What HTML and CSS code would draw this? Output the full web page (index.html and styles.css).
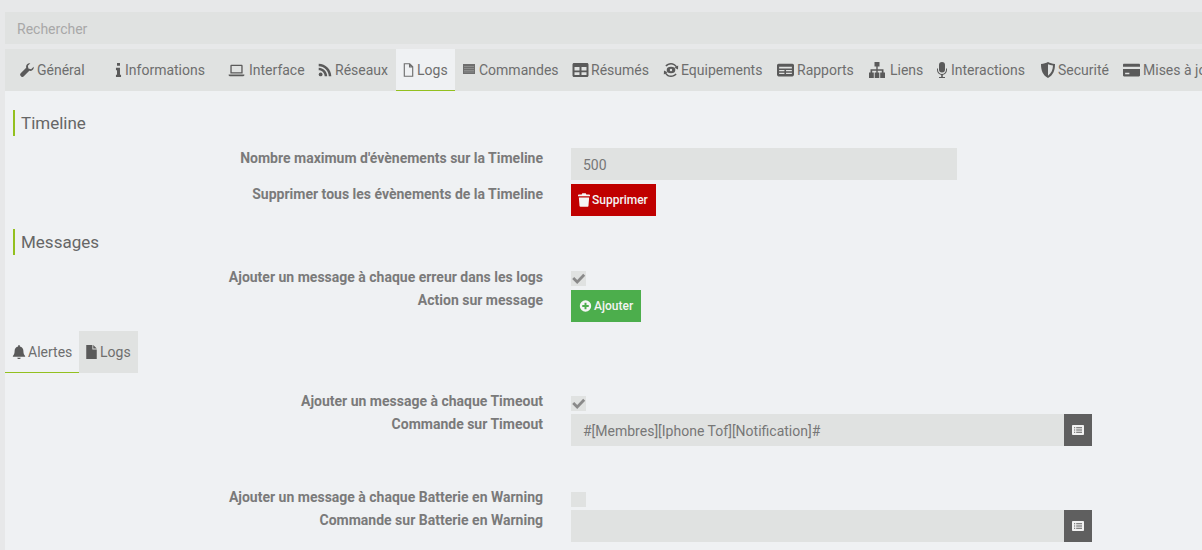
FILE: index.html
```html
<!DOCTYPE html>
<html lang="fr">
<head>
<meta charset="utf-8">
<title>Configuration</title>
<link rel="stylesheet" href="styles.css">
</head>
<body>
<div class="page">
  <div class="search">Rechercher</div>
  <nav class="tabs">
    <a class="tab t-general"><svg class="ic" viewBox="0 0 16 16"><path d="M15.6 4.2c.3 1.500-.2 3-1.300 3.900-1 .9-2.400 1.200-3.700.8L4.400 15.200c-.9.900-2.200.900-3 .1l-.7-.7c-.8-.8-.8-2.100.1-3l6.300-6.200C6.700 4.100 7 2.700 7.900 1.700 8.900.6 10.400.1 11.800.4L9 3.200l.6 3.100 3.100.7z"/></svg>Général</a>
    <a class="tab t-info"><svg class="ic ic-n" viewBox="0 0 7 16"><path d="M1.800 0h3.400v3H1.800zM.6 5.500h4.600v7.800h1.200V16H.6v-2.700h1.200V8.200H.6z"/></svg>Informations</a>
    <a class="tab t-iface"><svg class="ic ic-w" viewBox="0 0 18 16"><path fill-rule="evenodd" d="M3.200 2h11.600c.7 0 1.200.5 1.200 1.200v8.800H2V3.200C2 2.500 2.500 2 3.200 2zm.3 1.500v7h11v-7zM0 13h18v.7c0 .7-.6 1.300-1.300 1.300H1.300C.6 15 0 14.400 0 13.700z"/></svg>Interface</a>
    <a class="tab t-net"><svg class="ic" viewBox="0 0 16 16"><circle cx="3" cy="13" r="2.200"/><path d="M.8 5.500c5.300 0 9.700 4.400 9.700 9.700H7.600c0-3.700-3-6.800-6.800-6.800zM.8.800C8.700.8 15.200 7.300 15.200 15.200h-2.900C12.300 8.900 7.100 3.700.8 3.700z"/></svg>Réseaux</a>
    <a class="tab tab-on t-logs"><svg class="ic ic-f" viewBox="0 0 12 16"><path fill="none" stroke="currentColor" stroke-width="1.300" d="M1.200.9h6.200l3.400 3.400v10.800H1.200zM7.200 1v3.500h3.500"/></svg>Logs</a>
    <a class="tab t-cmd"><svg class="ic ic-s" viewBox="0 0 12 10"><path d="M0 0h12v10H0z"/><path fill="#a9abaa" d="M1 2.500h10v.6H1zM1 4.300h10v.5H1zM1 6h10v.5H1zM1 7.700h10v.5H1z"/></svg>Commandes</a>
    <a class="tab t-res"><svg class="ic ic-w ic-tight" viewBox="0 0 16 14"><path fill-rule="evenodd" d="M1.500 0h13c.8 0 1.500.7 1.500 1.500v11c0 .8-.7 1.500-1.500 1.500h-13C.7 14 0 13.300 0 12.500v-11C0 .7.700 0 1.500 0zM2 4v3.500h5V4zm7 0v3.500h5V4zm-7 5.200V12h5V9.200zm7 0V12h5V9.200z"/></svg>Résumés</a>
    <a class="tab t-eq"><svg class="ic ic-l" viewBox="0 0 16 16"><path d="M8 1c2.500 0 4.700 1.300 5.900 3.300l1.300-.8-.2 4-3.500-1.700 1.200-.7C11.700 3.500 10 2.500 8 2.500 6.300 2.500 4.700 3.300 3.700 4.600L2.300 3.700C3.700 2 5.700 1 8 1zM8 15c-2.500 0-4.700-1.300-5.900-3.300l-1.300.8.200-4 3.500 1.700-1.200.7c1 1.600 2.700 2.600 4.700 2.600 1.700 0 3.300-.8 4.300-2.100l1.400.9C12.300 14 10.300 15 8 15z"/><ellipse cx="8" cy="8" rx="4.300" ry="3.300"/><circle cx="8" cy="8" r="1.200" fill="#e0e2e1"/></svg>Equipements</a>
    <a class="tab t-rep"><svg class="ic ic-w ic-r" viewBox="0 0 16 12"><path fill-rule="evenodd" d="M1.500 0h13c.8 0 1.500.7 1.500 1.500v9c0 .8-.7 1.500-1.500 1.500h-13C.7 12 0 11.300 0 10.500v-9C0 .7.700 0 1.500 0zM2 3v1.500h12V3zm0 3v1.200h5V6zm6.500 0v1.200H14V6zM2 8.500v1.200h5V8.500zm6.500 0v1.200H14V8.500z"/></svg>Rapports</a>
    <a class="tab t-link"><svg class="ic ic-xl" viewBox="0 0 18 16"><path d="M6.500 0h5v4.500h-1.800v2.700h5.800v3.300H17V16h-4.800v-5.500h1.600V8.700H9.700v1.800h1.600V16H6.700v-5.500h1.600V8.700H4.200v1.800h1.600V16H1v-5.500h1.500V7.200h5.800V4.500H6.500z"/></svg>Liens</a>
    <a class="tab t-int"><svg class="ic ic-m" viewBox="0 0 10 16"><rect x="2" y="0" width="6" height="10.500" rx="3"/><path d="M0 6.500h1V8c0 2.200 1.800 4 4 4s4-1.800 4-4V6.500h1V8c0 2.500-1.800 4.500-4.200 4.900V15H8v1H2v-1h2.200v-2.100C1.800 12.500 0 10.500 0 8z"/></svg>Interactions</a>
    <a class="tab t-sec"><svg class="ic ic-l" viewBox="0 0 16 16"><path fill-rule="evenodd" d="M8 0c2 1.200 4.200 1.800 7 1.900 0 6-1.500 11-7 14.100C2.500 12.900 1 7.900 1 1.900 3.800 1.800 6 1.200 8 0zm0 2.200v11.500c3.600-2.500 4.800-6.200 5-10.200-1.900-.2-3.500-.6-5-1.300z"/></svg>Securité</a>
    <a class="tab t-upd"><svg class="ic ic-w ic-r" viewBox="0 0 16 12"><path fill-rule="evenodd" d="M1 0h14c.6 0 1 .4 1 1v2H0V1c0-.6.4-1 1-1zM0 5h16v6c0 .6-.4 1-1 1H1c-.6 0-1-.4-1-1zm2 3.500V10h4V8.500z"/></svg>Mises à jour</a>
  </nav>
  <main class="content">
    <h2 class="legend first">Timeline</h2>
    <div class="row">
      <label class="lbl">Nombre maximum d'évènements sur la Timeline</label>
      <div class="field short">500</div>
    </div>
    <div class="row">
      <label class="lbl">Supprimer tous les évènements de la Timeline</label>
      <div><a class="btn btn-red"><svg class="bi" viewBox="0 0 14 16"><path d="M5 0h4l.7 1.500H13c.6 0 1 .4 1 1V3.500H0V2.500c0-.6.4-1 1-1h3.300zM1 5h12l-.8 10c0 .6-.5 1-1.100 1H2.900c-.6 0-1-.4-1.100-1z"/></svg>Supprimer</a></div>
    </div>
    <h2 class="legend second">Messages</h2>
    <div class="row row-check">
      <label class="lbl">Ajouter un message à chaque erreur dans les logs</label>
      <div><span class="check on"><svg viewBox="0 0 15 15"><path d="M1.200 8l2-2 3 3 6-6.200 2 2-8 8.200z"/></svg></span></div>
    </div>
    <div class="row">
      <label class="lbl">Action sur message</label>
      <div><a class="btn btn-green"><svg class="bi bi-c" viewBox="0 0 16 16"><path fill-rule="evenodd" d="M8 1a7 7 0 1 1 0 14A7 7 0 0 1 8 1zM6.800 4v2.800H4v2.400h2.800V12h2.400V9.200H12V6.800H9.200V4z"/></svg>Ajouter</a></div>
    </div>
    <div class="subtabs">
      <a class="sub sub-on"><svg class="ic" viewBox="0 0 14 16"><path d="M7 0c.6 0 1 .4 1 1v.7c2.400.4 4 2.300 4 4.800 0 3 .7 4.800 2 6V13.500H0v-1c1.300-1.200 2-3 2-6 0-2.500 1.600-4.400 4-4.800V1c0-.6.400-1 1-1zM5 14.500h4C9 15.400 8.100 16 7 16s-2-.6-2-1.500z"/></svg>Alertes</a>
      <a class="sub"><svg class="ic ic-f" viewBox="0 0 12 16"><path d="M0 0h7v5h5v11H0zM8 0l4 4H8z"/></svg>Logs</a>
    </div>
    <div class="row row-check">
      <label class="lbl">Ajouter un message à chaque Timeout</label>
      <div><span class="check low on"><svg viewBox="0 0 15 15"><path d="M1.200 8l2-2 3 3 6-6.200 2 2-8 8.200z"/></svg></span></div>
    </div>
    <div class="row">
      <label class="lbl">Commande sur Timeout</label>
      <div class="group">
        <div class="field grow">#[Membres][Iphone Tof][Notification]#</div>
        <a class="addon"><svg viewBox="0 0 12 10"><path fill-rule="evenodd" d="M.8 0h10.400c.4 0 .8.400.8.800v8.400c0 .4-.4.800-.8.800H.8c-.4 0-.8-.4-.8-.8V.8C0 .4.400 0 .8 0zM2 2.300v1h1.200v-1zm2.200 0v1H10v-1zM2 4.500v1h1.200v-1zm2.200 0v1H10v-1zM2 6.700v1h1.200v-1zm2.200 0v1H10v-1z"/></svg></a>
      </div>
    </div>
    <div class="row row-check spaced">
      <label class="lbl">Ajouter un message à chaque Batterie en Warning</label>
      <div><span class="check low"></span></div>
    </div>
    <div class="row">
      <label class="lbl">Commande sur Batterie en Warning</label>
      <div class="group">
        <div class="field grow"></div>
        <a class="addon"><svg viewBox="0 0 12 10"><path fill-rule="evenodd" d="M.8 0h10.400c.4 0 .8.400.8.800v8.400c0 .4-.4.800-.8.800H.8c-.4 0-.8-.4-.8-.8V.8C0 .4.400 0 .8 0zM2 2.300v1h1.200v-1zm2.200 0v1H10v-1zM2 4.500v1h1.200v-1zm2.200 0v1H10v-1zM2 6.700v1h1.200v-1zm2.200 0v1H10v-1z"/></svg></a>
      </div>
    </div>
  </main>
</div>
</body>
</html>
```
FILE: styles.css
```css
* { box-sizing: border-box; }
html, body { margin: 0; height: 550px; overflow: hidden; }
body { background: #e7e8e9; font-family: Roboto, "Liberation Sans", sans-serif; font-size: 14px; color: #6e6e6e; }
.page { width: 1400px; padding: 12px 0 0 5px; }
.search { height: 32px; line-height: 35px; padding-left: 12px; background: #e0e2e1; color: #a8a8a8; }
.tabs { display: flex; height: 42px; margin-top: 5px; background: #e0e2e1; }
.tab { display: flex; align-items: center; height: 42px; padding: 0 7px; color: #6e6e6e; white-space: nowrap; }
.ic { width: 14px; height: 14px; margin-right: 3px; fill: #5a5a5a; flex: none; }
.ic-w { width: 17px; margin-right: 4px; }
.ic-r { margin-right: 3px; }
.ic-n { width: 7px; }
.ic-f { width: 11px; }
.ic-s { width: 12px; height: 10px; margin-top: -2px; margin-right: 4px; fill: #6e6e6e; }
.ic-tight { margin-right: 2px; }
.ic-l { width: 16px; height: 16px; margin-right: 2px; }
.ic-xl { width: 18px; height: 16px; margin-right: 4px; }
.ic-m { width: 10px; height: 16px; margin-right: 4px; }
.t-general { width: 95px; padding-left: 15px; }
.t-info { width: 123px; padding-left: 15px; }
.t-iface { width: 91px; padding-left: 5px; }
.t-net { width: 82px; padding-left: 4px; }
.tab-on { background: #eff1f3; border-bottom: 1px solid #93c01f; width: 59px; }
.t-cmd { width: 110px; padding-left: 8px; }
.t-res { width: 91px; }
.t-eq { width: 114px; }
.t-rep { width: 91px; }
.t-link { width: 69px; }
.t-int { width: 103px; }
.t-sec { width: 83px; }
.content { background: #eff1f3; height: 459px; width: 1197px; overflow: hidden; padding-top: 1px; }
.legend { margin: 0; height: 26px; line-height: 26px; margin-left: 8px; padding-left: 6px; border-left: 2px solid #93c01f; font-size: 17px; font-weight: 400; color: #666; }
.first { margin-top: 18px; margin-bottom: 12px; }
.second { margin-top: 13px; margin-bottom: 12px; }
.row { display: grid; grid-template-columns: 538px 521px; column-gap: 28px; margin-bottom: 4px; }
.row-check { margin-bottom: 0; height: 23px; }
.lbl { font-weight: 700; line-height: 20px; text-align: right; color: #7a7a7a; }
.field { height: 32px; line-height: 34px; padding-left: 12px; background: #e0e2e1; color: #777; }
.short { width: 386px; }
.group { display: flex; width: 521px; }
.grow { flex: 1; }
.addon { display: flex; align-items: center; justify-content: center; width: 28px; height: 32px; background: #5f5f5f; }
.addon svg { width: 12px; height: 10px; fill: #f2f2f2; }
.btn { display: inline-flex; align-items: center; height: 32px; padding: 0 7px 1px; color: #f4f4f4; font-size: 12px; font-weight: 500; }
.btn-red { background: #c00000; width: 85px; }
.btn-green { background: #4cae4c; width: 70px; padding-left: 8px; }
.bi { width: 12px; height: 14px; margin-right: 2px; fill: #f5f5f5; }
.bi-c { width: 13px; margin-right: 2px; }
.check { display: block; width: 15px; height: 15px; margin-top: 4px; background: #e0e2e1; }
.low { margin-top: 5px; }
.check svg { display: block; width: 15px; height: 15px; fill: #8a8a8a; }
.subtabs { display: flex; height: 42px; margin-top: 9px; margin-bottom: 18px; }
.sub { display: flex; align-items: center; height: 42px; padding: 0 7px; color: #6e6e6e; }
.sub-on { width: 74px; border-bottom: 1px solid #93c01f; }
.sub-on .ic { margin-right: 2px; }
.sub:not(.sub-on) { width: 59px; background: #e0e2e1; }
.sub:not(.sub-on) .ic { margin-right: 3px; }
.spaced { margin-top: 41px; }
```
